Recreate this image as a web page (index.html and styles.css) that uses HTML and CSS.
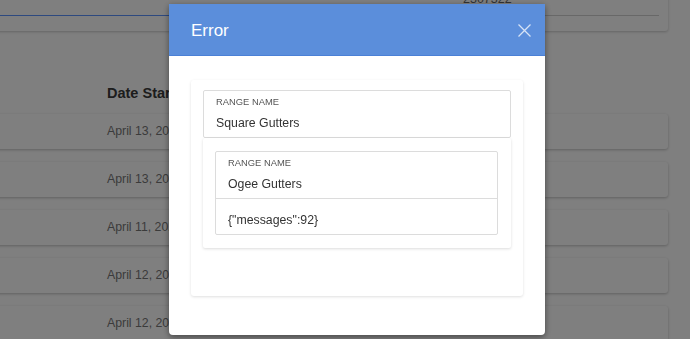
FILE: index.html
```html
<!DOCTYPE html>
<html>
<head>
<meta charset="utf-8">
<link rel="stylesheet" href="styles.css">
</head>
<body>
<div class="page">
  <div class="top-card">
    <div class="top-left"><div class="bar bar-blue"></div></div>
    <div class="top-right">
      <div class="stat">2307322</div>
      <div class="bar bar-gray"></div>
    </div>
  </div>
  <h2 class="col-head">Date Started</h2>
  <div class="rows">
    <div class="row">April 13, 2021</div>
    <div class="row">April 13, 2021</div>
    <div class="row">April 11, 2021</div>
    <div class="row">April 12, 2021</div>
    <div class="row">April 12, 2021</div>
  </div>
</div>
<div class="overlay"></div>
<div class="modal">
  <div class="modal-head">
    <span class="modal-title">Error</span>
    <svg class="close" width="13" height="13" viewBox="0 0 13 13"><path d="M0.5 0.5 L12.5 12.5 M12.5 0.5 L0.5 12.5" stroke="currentColor" stroke-width="1.3" fill="none"/></svg>
  </div>
  <div class="modal-body">
    <div class="card">
      <div class="box">
        <div class="field">
          <div class="label">RANGE NAME</div>
          <div class="value">Square Gutters</div>
        </div>
      </div>
      <div class="sub-card">
        <div class="box">
          <div class="field">
            <div class="label">RANGE NAME</div>
            <div class="value">Ogee Gutters</div>
          </div>
          <div class="message">{"messages":92}</div>
        </div>
      </div>
    </div>
  </div>
</div>
</body>
</html>
```
FILE: styles.css
```css
html, body {
  margin: 0;
  padding: 0;
  background: #fff;
  font-family: "Liberation Sans", Arial, sans-serif;
  overflow: hidden;
  height: 339px;
}
.page {
  width: 674px;
  margin-left: -6px;
}
.top-card {
  margin-top: -30px;
  height: 61px;
  background: #fff;
  border-radius: 3px;
  box-shadow: 0 1px 3px rgba(0,0,0,0.22);
  display: grid;
  grid-template-columns: 1fr 196px;
  column-gap: 23px;
  padding-right: 9px;
  box-sizing: border-box;
}
.top-left {
  padding-top: 45px;
}
.top-right {
  padding-top: 21px;
}
.stat {
  font-size: 12.5px;
  line-height: 16px;
  color: #666;
}
.top-right .bar {
  margin-top: 8px;
}
.bar {
  height: 1px;
}
.bar-blue { background: #5a92ff; }
.bar-gray { background: #d0d0d0; }
.col-head {
  margin: 53px 0 0 113px;
  font-size: 14.5px;
  line-height: 18px;
  font-weight: bold;
  color: #3a3a3a;
}
.rows {
  margin-top: 12px;
  display: flex;
  flex-direction: column;
  gap: 13px;
}
.row {
  height: 35px;
  line-height: 35px;
  padding-left: 113px;
  background: #fff;
  border-radius: 3px;
  box-shadow: 0 1px 3px rgba(0,0,0,0.25);
  font-size: 12.3px;
  color: #777;
}
.overlay {
  position: fixed;
  inset: 0;
  background: rgba(0,0,0,0.5);
}
.modal {
  position: fixed;
  left: 169px;
  top: 4px;
  width: 376px;
  height: 331px;
  background: #fff;
  border-radius: 0 0 4px 4px;
  box-shadow: 0 2px 6px rgba(0,0,0,0.45);
  overflow: hidden;
}
.modal-head {
  height: 51px;
  background: #5b8edb;
  border-bottom: 1px solid #4b80d6;
  display: flex;
  align-items: center;
  justify-content: space-between;
  padding: 0 14px 0 22px;
}
.modal-title {
  font-size: 17px;
  color: #fff;
  padding-top: 2px;
}
.close {
  color: rgba(255,255,255,0.75);
  margin-top: 1px;
}
.modal-body {
  padding: 24px 22px;
}
.card {
  background: #fff;
  border-radius: 3px;
  box-shadow: 0 1px 3px rgba(0,0,0,0.13);
  padding: 10px 12px 48px;
}
.box {
  border: 1px solid #dcdcdc;
  border-radius: 2px;
}
.field {
  padding: 5px 12px 6px;
}
.label {
  font-size: 9.4px;
  line-height: 12px;
  color: #555;
}
.value {
  margin-top: 7px;
  font-size: 12.3px;
  line-height: 16px;
  color: #333;
}
.sub-card {
  background: #fff;
  border-radius: 2px;
  box-shadow: 0 1px 3px rgba(0,0,0,0.14);
  padding: 13px 13px 13px 12px;
}
.message {
  border-top: 1px solid #dcdcdc;
  padding: 13px 12px 6px;
  font-size: 12.3px;
  line-height: 16px;
  color: #333;
}
```
